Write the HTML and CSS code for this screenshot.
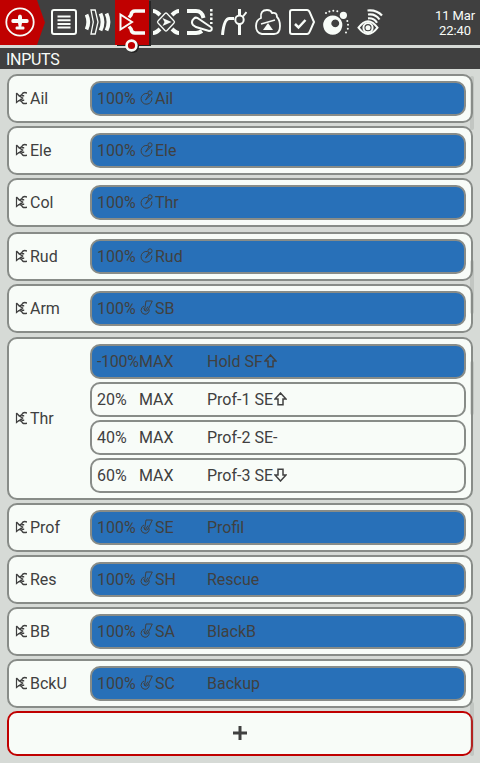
FILE: index.html
```html
<!DOCTYPE html>
<html lang="en">
<head>
<meta charset="utf-8">
<title>Inputs</title>
<link rel="stylesheet" href="styles.css">
</head>
<body>
<svg class="defs" aria-hidden="true">
  <symbol id="input" viewBox="0 0 12 14"><path stroke-width="1.200" d="M1.500 2v9.500L4 9.500M1.500 2 4.500 5"/><path stroke-width="1.500" d="M12 2.200Q10 1 8 2 6.500 4.800 4.500 5L7.500 7 4.500 9.500Q6.500 9.700 7.500 11.800 9 13 12 12.200M7 4.800h2.200M6.500 9.300h2.700"/></symbol>
  <symbol id="stick" viewBox="0 0 14 16"><path d="M10 4.500 6.500 10 11.800 5M8.500 3.500A5.400 5.400 0 1 0 12.700 7.500"/><circle cx="11" cy="2.900" r="2.100"/></symbol>
  <symbol id="switch" viewBox="0 0 14 16"><path d="M7 1h6.300L9 10Q7.500 12 5.500 10.500zM5 6Q2 7.200 2 10.500 2.500 14 6 14.300 10 14 10.300 9.500M4.300 8.500 6.500 10.500 9 6.500"/></symbol>
  <symbol id="up" viewBox="0 0 13 14"><path d="M6.500 1 12 7H9v5.700H4V7H1z"/></symbol>
  <symbol id="down" viewBox="0 0 13 14"><path d="M6.500 13 12 7H9V1.300H4V7H1z"/></symbol>
</svg>
<header class="topbar">
  <div class="home"><svg width="45" height="45" viewBox="0 0 45 45"><path fill="#c00000" d="M0 0h37l8 22.500L37 45H0z"/><circle cx="20" cy="22" r="13.700" fill="none" stroke="#f8fcf8" stroke-width="1.800"/><path fill="#f8fcf8" d="M18 17q0-2.500 2-2.500t2 2.500v2h5q1.700 0 1.700 2T27 23h-5l-.7 3.500h2.200q1 0 1 1.500t-1 1.500h-7q-1 0-1-1.500t1-1.500h2.200L18 23h-5q-1.700 0-1.700-2t1.700-2h5z"/></svg></div>
  <nav class="tabs">
    <svg class="tab" viewBox="0 0 26 26"><rect x="1" y="1" width="24" height="24" rx="2"/><path d="M6.500 7.500h13M6.500 11.200h13M6.500 14.900h13M6.500 18.600h13"/></svg>
    <svg class="tab" viewBox="0 0 26 26"><path stroke-width="3.800" d="M1.500 5.500q3.500 7.500 0 15M15.500 4.500q4 8.500 0 17M21.500 4.500q4 8.500 0 17"/><path stroke-width="1.300" d="M6 1h4.200l2.800 12-2.800 12H6l2.300-12z"/></svg>
    <div class="active"><svg class="tab" viewBox="0 0 26 26"><path d="M1.500 5.500v15L13 13z"/><path stroke-width="3.500" d="M26 2H16q-3.500 0-4 4l-2 2.500M26 24H16q-3.500 0-4-4l-2-2.500"/></svg></div>
    <svg class="tab" viewBox="0 0 26 26"><path stroke-width="4" d="M0 2q3 0 7 4M26 2q-3 0-7 4M0 24q3 0 7-4M26 24q-3 0-7-4"/><path stroke-width="1.300" d="m12 4.500-7 7.500q-1 1 0 2l7 7.500q1 1 2 0l7-7.500q1-1 0-2l-7-7.500q-1-1-2 0z"/><path class="solid" d="m9.500 9 9 4-9 4 2-4z"/></svg>
    <svg class="tab" viewBox="0 0 26 26"><path stroke-width="4" d="M0 2h9q6 0 7.500 7M0 24h9q3 0 6-2"/><path d="M7 9.500Q3.500 12.500 6 16l3 2 13 4q3.500 0 2.500-3.500L12 10Q9 7.500 7 9.500z"/><path stroke-width="2.500" stroke-dasharray="2.500 1.800" d="M24.300 0v15"/></svg>
    <svg class="tab" viewBox="0 0 26 26"><path stroke-width="3" d="M1.500 26Q3 9.500 8.500 9.500H13M18.500 0v6M18.500 15v11"/><circle cx="18.500" cy="10.700" r="4.200"/><path d="m22 7.500 3.500-4.500"/></svg>
    <svg class="tab" viewBox="0 0 26 26"><path stroke-width="1.800" d="M6 9Q5 1 12 1q4 0 5 3 5-1 5 4 3 3 3 9 0 8-6 8H7q-6-1-6-8 0-6 5-8z"/><path stroke-width="1.500" d="m6 15 14-4"/><path class="solid" d="m13 14 5 7H8z"/></svg>
    <svg class="tab" viewBox="0 0 26 26"><path d="M3 1h15q2 0 3 3l4 9-4 9q-1 3-3 3H3q-2 0-2-2V3q0-2 2-2z"/><path stroke-width="2.500" d="m6 15 3.500 3.500 7-7.500"/></svg>
    <svg class="tab" viewBox="0 0 26 26"><path class="solid" fill-rule="evenodd" d="M9.700 6.500a9.600 9.600 0 1 0 .1 0zM12.300 10.500a3.900 3.900 0 1 1-.1 0z"/><circle class="solid" cx="20.400" cy="6.300" r="3.600"/><g class="solid"><circle cx="3" cy="4" r="1"/><circle cx="6.400" cy="2.400" r="1"/><circle cx="10.300" cy="1.700" r="1"/><circle cx="14.300" cy="2.300" r="1"/><circle cx="24.300" cy="12" r="1"/><circle cx="25" cy="15.800" r="1"/><circle cx="24.800" cy="19.700" r="1"/><circle cx="23" cy="23.500" r="1"/></g></svg>
    <svg class="tab" viewBox="0 0 26 26"><path d="M1.500 18.700q9.500-13 19 0-9.500 12.500-19 0z"/><circle cx="11" cy="18.700" r="4.600"/><circle class="solid" cx="11" cy="18.700" r="2.500"/><path stroke-width="2.200" d="M10.500 1.500q9-1 14.500 5M11 5.500q7.500-1 11.500 5M11 9.300q6-.5 9 4.500"/></svg>
  </nav>
  <div class="clock">11 Mar<br>22:40</div>
  <svg class="marker" width="16" height="16" viewBox="0 0 16 16"><circle cx="8.800" cy="8.800" r="6.200" fill="#222"/><circle cx="7.500" cy="7.500" r="4.900" fill="#c00000" stroke="#f8fcf8" stroke-width="2.600"/></svg>
</header>
<h1 class="title">INPUTS</h1>
<main class="list">
  <section class="group"><div class="name"><svg><use href="#input"/></svg>Ail</div><div class="lines"><div class="line on"><span>100%</span><span><svg><use href="#stick"/></svg>Ail</span></div></div></section>
  <section class="group"><div class="name"><svg><use href="#input"/></svg>Ele</div><div class="lines"><div class="line on"><span>100%</span><span><svg><use href="#stick"/></svg>Ele</span></div></div></section>
  <section class="group gap5"><div class="name"><svg><use href="#input"/></svg>Col</div><div class="lines"><div class="line on"><span>100%</span><span><svg><use href="#stick"/></svg>Thr</span></div></div></section>
  <section class="group"><div class="name"><svg><use href="#input"/></svg>Rud</div><div class="lines"><div class="line on"><span>100%</span><span><svg><use href="#stick"/></svg>Rud</span></div></div></section>
  <section class="group gap4"><div class="name"><svg><use href="#input"/></svg>Arm</div><div class="lines"><div class="line on"><span>100%</span><span><svg><use href="#switch"/></svg>SB</span></div></div></section>
  <section class="group"><div class="name"><svg><use href="#input"/></svg>Thr</div><div class="lines">
    <div class="line on"><span class="tight">-100%</span><span>MAX</span><span>Hold SF<svg><use href="#up"/></svg></span></div>
    <div class="line"><span>20%</span><span>MAX</span><span>Prof-1 SE<svg><use href="#up"/></svg></span></div>
    <div class="line"><span>40%</span><span>MAX</span><span>Prof-2 SE-</span></div>
    <div class="line"><span>60%</span><span>MAX</span><span>Prof-3 SE<svg><use href="#down"/></svg></span></div>
  </div></section>
  <section class="group"><div class="name"><svg><use href="#input"/></svg>Prof</div><div class="lines"><div class="line on"><span>100%</span><span><svg><use href="#switch"/></svg>SE</span><span>Profil</span></div></div></section>
  <section class="group"><div class="name"><svg><use href="#input"/></svg>Res</div><div class="lines"><div class="line on"><span>100%</span><span><svg><use href="#switch"/></svg>SH</span><span>Rescue</span></div></div></section>
  <section class="group"><div class="name"><svg><use href="#input"/></svg>BB</div><div class="lines"><div class="line on"><span>100%</span><span><svg><use href="#switch"/></svg>SA</span><span>BlackB</span></div></div></section>
  <section class="group"><div class="name"><svg><use href="#input"/></svg>BckU</div><div class="lines"><div class="line on"><span>100%</span><span><svg><use href="#switch"/></svg>SC</span><span>Backup</span></div></div></section>
  <button class="add" aria-label="Add"><svg width="14" height="14" viewBox="0 0 14 14"><path d="M7 0v14M0 7h14"/></svg></button>
  <i class="scroll s1"></i><i class="scroll s2"></i><i class="scroll s3"></i><i class="scroll s4"></i>
</main>
</body>
</html>
```
FILE: styles.css
```css
* { box-sizing: border-box; }
body { margin: 0; background: #d6dad6; color: #404040; font: 16px/20px Roboto, sans-serif; }
.defs { position: absolute; width: 0; height: 0; }
.topbar { position: relative; display: flex; height: 48px; background: #404040; border-bottom: 3px solid #d6dad6; }
.home { width: 46px; }
.tabs { display: flex; align-items: flex-start; height: 45px; padding: 9px 0 0 5px; gap: 8px; }
.tab { display: block; flex-shrink: 0; width: 26px; height: 26px; fill: none; stroke: #f8fcf8; stroke-width: 2; }
.tab .solid { fill: #f8fcf8; stroke: none; }
.active { width: 34px; height: 45px; margin: -9px -4px 0; padding: 9px 4px 0; background: #c00000; box-shadow: 2px 1px 0 #252525; }
.clock { margin: 8px 4px 0 auto; width: 42px; font-size: 13px; line-height: 15px; letter-spacing: -0.1px; text-align: center; color: #f8fcf8; white-space: nowrap; }
.marker { position: absolute; left: 124px; top: 38px; }
.title { margin: 0; height: 21px; padding-left: 6px; background: #404040; color: #f8fcf8; font-size: 16px; font-weight: 400; line-height: 24px; letter-spacing: -0.3px; }
.list { position: relative; display: flex; flex-direction: column; gap: 3px; padding: 5px 7px 7px; }
.group { display: flex; flex-shrink: 0; align-items: center; padding: 5px; border: 2px solid #888c88; border-radius: 10px; background: #f8fcf8; }
.gap5 { margin-bottom: 2px; }
.gap4 { margin-bottom: 1px; }
.name { display: flex; align-items: center; width: 76px; padding-left: 1px; }
.name svg { width: 12px; height: 14px; margin: 0 3px 1px 0; }
.name svg, .line svg { fill: none; stroke: #404040; stroke-width: 1.3; }
.lines { display: flex; flex-direction: column; flex: 1; gap: 3px; }
.line { display: grid; grid-template-columns: 42px 68px 1fr; align-items: center; height: 35px; padding-left: 5px; border: 2px solid #888c88; border-radius: 10px; white-space: nowrap; }
.line span { display: flex; align-items: center; }
.line .tight { letter-spacing: -0.3px; }
.line svg { width: 14px; height: 16px; margin: 0 2px 1px 0; stroke-width: 1; }
.line span:nth-child(3) svg { width: 13px; height: 14px; margin: 0 0 1px 1px; stroke-width: 1.5; }
.on { background: #2870b8; }
.add { display: flex; align-items: center; justify-content: center; height: 45px; padding: 0 0 2px; border: 2px solid #c00000; border-radius: 10px; background: #f8fcf8; }
.add path { stroke: #404040; stroke-width: 3; }
.scroll { position: absolute; right: 6px; width: 4px; height: 54px; border-radius: 2px; background: rgba(136, 140, 136, 0.25); }
.s1 { top: 7px; }
.s2 { top: 191px; }
.s3 { top: 292px; }
.s4 { top: 633px; }
```
